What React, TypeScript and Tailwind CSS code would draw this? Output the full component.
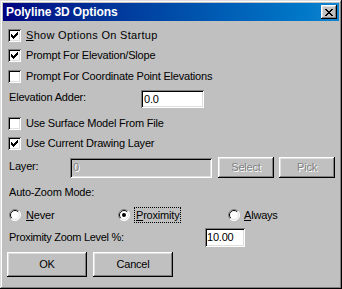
import React from "react";

const raised =
  "bg-[#c0c0c0] shadow-[inset_-1px_-1px_#000,inset_1px_1px_#fff,inset_-2px_-2px_#808080,inset_2px_2px_#dfdfdf]";
const sunken =
  "shadow-[inset_1px_1px_#808080,inset_-1px_-1px_#fff,inset_2px_2px_#000,inset_-2px_-2px_#dfdfdf]";

// classic check: 3px tall columns stepping down then up
const checkCols = [2, 3, 4, 3, 2, 1, 0];

function Checkbox({ checked }: { checked?: boolean }) {
  return (
    <div className={`relative w-[13px] h-[13px] shrink-0 bg-white ${sunken}`}>
      {checked && (
        <svg width="13" height="13" className="absolute left-0 top-0" shapeRendering="crispEdges">
          {checkCols.map((y, i) => (
            <rect key={i} x={3 + i} y={3 + y} width="1" height="3" fill="#000" />
          ))}
        </svg>
      )}
    </div>
  );
}

function Radio({ checked }: { checked?: boolean }) {
  return (
    <svg width="12" height="12" className="shrink-0">
      <circle cx="6" cy="6" r="5.5" fill="#fff" />
      <path d="M2.1 9.9 A5.5 5.5 0 0 1 9.9 2.1" stroke="#808080" fill="none" />
      <path d="M9.9 2.1 A5.5 5.5 0 0 1 2.1 9.9" stroke="#fff" fill="none" />
      <path d="M2.8 9.2 A4.5 4.5 0 0 1 9.2 2.8" stroke="#000" fill="none" />
      <path d="M9.2 2.8 A4.5 4.5 0 0 1 2.8 9.2" stroke="#dfdfdf" fill="none" />
      {checked && <circle cx="6" cy="6" r="2" fill="#000" />}
    </svg>
  );
}

const closeX = [
  [0, 1, 6, 7],
  [1, 2, 5, 6],
  [2, 3, 4, 5],
  [3, 4],
  [2, 3, 4, 5],
  [1, 2, 5, 6],
  [0, 1, 6, 7],
];

function CheckRow({ checked, children, className = "" }: { checked?: boolean; children: React.ReactNode; className?: string }) {
  return (
    <div className={`h-[20px] flex items-center gap-[5px] ${className}`}>
      <Checkbox checked={checked} />
      <span>{children}</span>
    </div>
  );
}

export default function App() {
  return (
    <div className="w-[342px] h-[289px] bg-[#c0c0c0] p-[3px] flex flex-col text-[11px] tracking-[-0.2px] text-black font-['Liberation_Sans',Arial,sans-serif] shadow-[inset_-1px_-1px_#000,inset_1px_1px_#dfdfdf,inset_-2px_-2px_#808080,inset_2px_2px_#fff]">
      {/* title bar */}
      <div className="h-[18px] flex items-center justify-between pl-[3px] pr-[2px] bg-linear-to-r from-[#000080] to-[#1084d0]">
        <span className="text-white font-bold text-[12px] tracking-[-0.1px]">Polyline 3D Options</span>
        <div className={`w-[16px] h-[14px] flex items-center justify-center ${raised}`}>
          <svg width="8" height="7" shapeRendering="crispEdges">
            {closeX.map((row, y) =>
              row.map((x) => <rect key={`${x}-${y}`} x={x} y={y} width="1" height="1" fill="#000" />)
            )}
          </svg>
        </div>
      </div>

      <div className="flex flex-col pl-[5px]">
        <CheckRow checked className="mt-[4px] tracking-[0.3px]">
          <u>S</u>how Options On Startup
        </CheckRow>
        <CheckRow checked>Prompt For Elevation/Slope</CheckRow>
        <CheckRow className="mt-[1px]">Prompt For Coordinate Point Elevations</CheckRow>

        <div className="h-[18px] mt-[4px] flex items-center pl-[1px]">
          <span className="w-[132px] -mt-[3px]">Elevation Adder:</span>
          <div className={`w-[63px] h-[18px] bg-white pl-[3px] flex items-center ${sunken}`}>0.0</div>
        </div>

        <CheckRow className="mt-[5px]">Use Surface Model From File</CheckRow>
        <CheckRow checked>Use Current Drawing Layer</CheckRow>

        <div className="h-[21px] mt-[4px] flex items-center pl-[1px]">
          <span className="w-[61px] -mt-[2px]">Layer:</span>
          <div className={`w-[142px] h-[20px] bg-[#c0c0c0] pl-[3px] flex items-center text-[#808080] [text-shadow:1px_1px_0_#fff] ${sunken}`}>0</div>
          <div className={`w-[56px] h-[21px] ml-[6px] flex items-center justify-center text-[#808080] [text-shadow:1px_1px_0_#fff] ${raised}`}>Select</div>
          <div className={`w-[56px] h-[21px] ml-[5px] flex items-center justify-center text-[#808080] [text-shadow:1px_1px_0_#fff] ${raised}`}>Pick</div>
        </div>

        <div className="h-[20px] mt-[4px] flex items-center pl-[1px]">Auto-Zoom Mode:</div>

        <div className="h-[20px] mt-[3px] flex items-center pl-[1px]">
          <div className="w-[109px] flex items-center gap-[5px]">
            <Radio />
            <span>
              <u>N</u>ever
            </span>
          </div>
          <div className="w-[110px] flex items-center gap-[4px]">
            <Radio checked />
            <span className="px-[1px] border border-dotted border-black leading-[14px]">
              <u>P</u>roximity
            </span>
          </div>
          <div className="flex items-center gap-[4px]">
            <Radio />
            <span>
              <u>A</u>lways
            </span>
          </div>
        </div>

        <div className="h-[19px] mt-[3px] flex items-center pl-[1px]">
          <span className="w-[196px] tracking-[-0.3px]">Proximity Zoom Level %:</span>
          <div className={`w-[40px] h-[19px] bg-white pl-[2px] flex items-center ${sunken}`}>10.00</div>
        </div>

        <div className="h-[25px] mt-[5px] flex -ml-[1px]">
          <div className={`w-[80px] h-[25px] flex items-center justify-center ${raised}`}>OK</div>
          <div className={`w-[80px] h-[25px] ml-[6px] flex items-center justify-center ${raised}`}>Cancel</div>
        </div>
      </div>
    </div>
  );
}
